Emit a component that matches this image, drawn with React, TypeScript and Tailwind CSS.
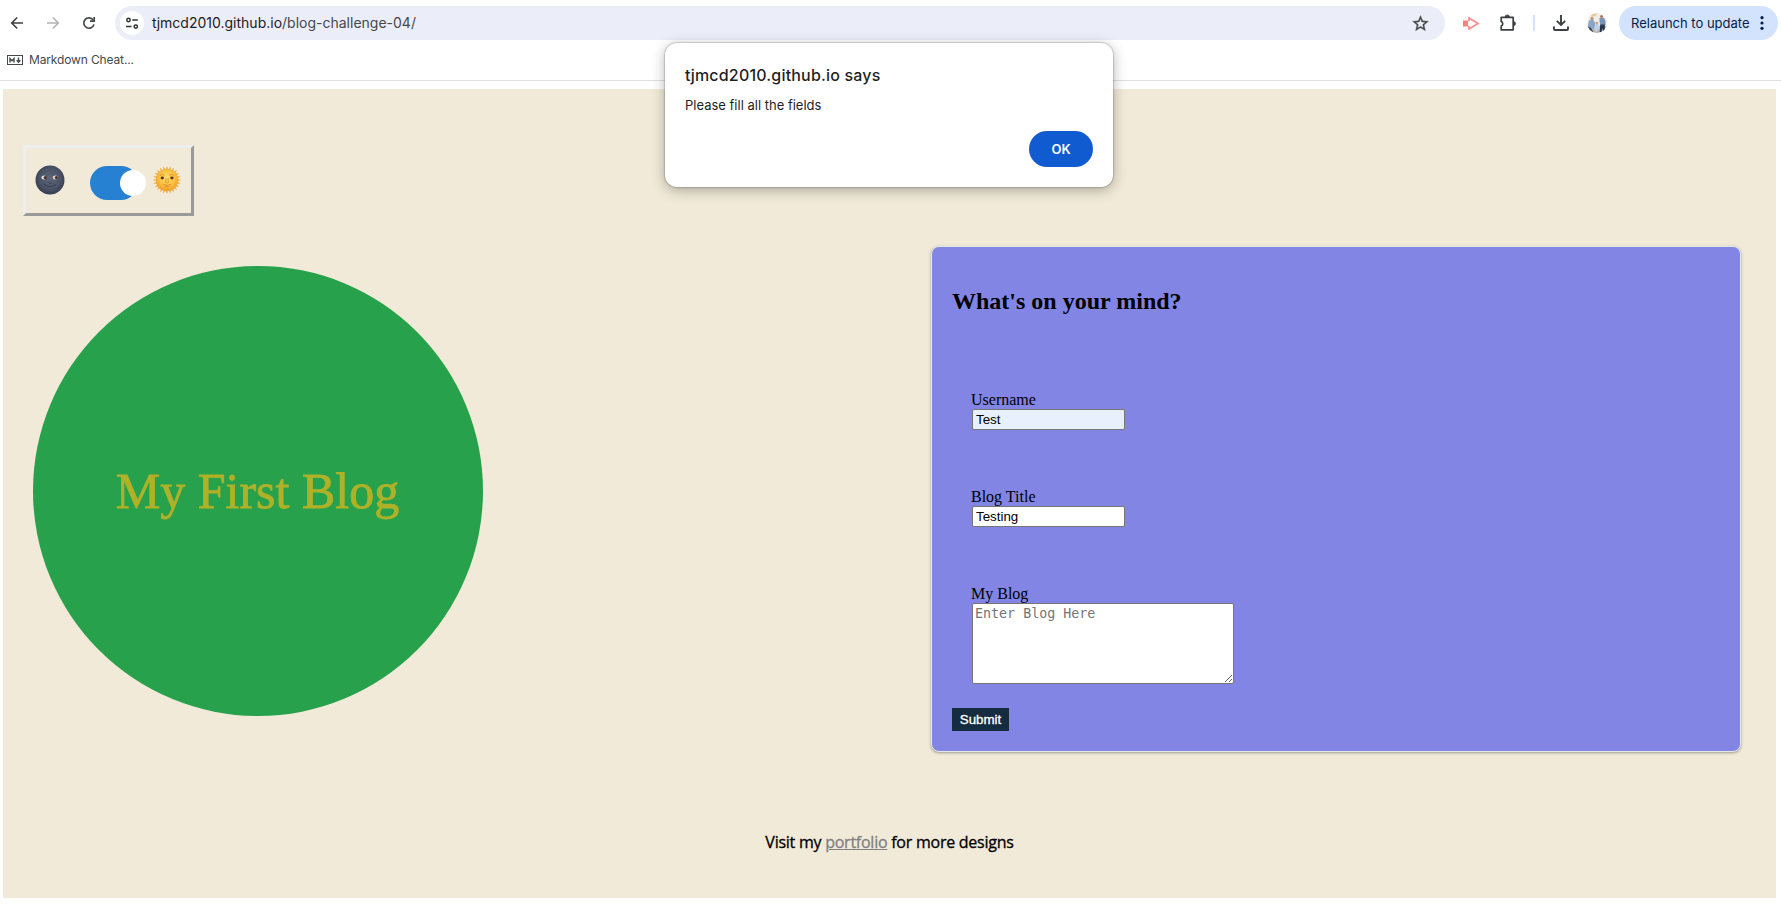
import type { ReactNode } from "react";

function BackIcon({ className }: { className: string }) {
  return (
    <svg viewBox="0 0 14 14" className={className} fill="none" stroke="currentColor" strokeWidth="1.6">
      <path d="M13 7H2M7.2 1.5 1.7 7l5.5 5.5" />
    </svg>
  );
}

function ReloadIcon() {
  return (
    <svg viewBox="0 0 14 14" className="size-3.5 text-[#444746]" fill="none" stroke="currentColor" strokeWidth="1.7">
      <path d="M12 8.4A5.2 5.2 0 1 1 11.2 4" />
      <path d="M12.2 1v4.2H8" />
    </svg>
  );
}

function TuneIcon() {
  return (
    <svg viewBox="0 0 13 13" className="size-[13px] text-[#2f3133]" fill="none" stroke="currentColor" strokeWidth="1.5">
      <circle cx="2.5" cy="3" r="1.7" />
      <path d="M6.3 3h5.5M0 9.6h5.5" />
      <circle cx="9.8" cy="9.6" r="1.7" />
    </svg>
  );
}

function StarIcon() {
  return (
    <svg viewBox="0 0 24 24" className="size-[19px] text-[#444746]" fill="currentColor" stroke="currentColor" strokeWidth=".4">
      <path d="m22 9.24-7.19-.62L12 2 9.19 8.63 2 9.24l5.46 4.73L5.82 21 12 17.27 18.18 21l-1.63-7.03L22 9.24zM12 15.4l-3.76 2.27 1-4.28-3.32-2.88 4.38-.38L12 6.1l1.71 4.04 4.38.38-3.32 2.88 1 4.28L12 15.4z" />
    </svg>
  );
}

function CameraIcon() {
  return (
    <svg viewBox="0 0 17 13" className="h-[13px] w-[17px]">
      <rect x="0" y="3.5" width="5" height="6" fill="#fb7f7f" />
      <path d="M6 4.2V1l9 5.5-9 5.5V8.8" fill="none" stroke="#fb8c8c" strokeWidth="1.7" />
    </svg>
  );
}

function PuzzleIcon() {
  return (
    <svg viewBox="0 0 18 18" className="size-[18px] text-[#3c4043]" fill="none" stroke="currentColor" strokeWidth="1.7" strokeLinejoin="round">
      <path d="M2.2 3.4H14.2V15.8H2.2V12a2.5 2.5 0 0 0 0-4.6Z" />
      <path d="M6 3.2a2.3 2.3 0 0 1 4.6 0ZM14.4 7.4a2.2 2.2 0 0 1 0 4.4Z" fill="currentColor" strokeWidth=".6" />
    </svg>
  );
}

function DownloadIcon() {
  return (
    <svg viewBox="0 0 16 16" className="size-4 text-[#3c4043]" fill="none" stroke="currentColor" strokeWidth="1.9">
      <path d="M8 0v9.5M3.8 5.8 8 10l4.2-4.2M1 11.5V14q0 1 1 1h12q1 0 1-1v-2.5" />
    </svg>
  );
}

function Avatar() {
  return (
    <svg viewBox="0 0 20 20" className="size-5">
      <clipPath id="avatar">
        <circle cx="10" cy="10" r="10" />
      </clipPath>
      <g clipPath="url(#avatar)">
        <rect width="20" height="20" fill="#f1ece6" />
        <path d="M0 13h20v7H0z" fill="#b5b3ae" />
        <path d="M2 7.5l4-1 2 3v5l-4 2-3-4z" fill="#86a5c8" />
        <path d="M12.5 5h4.5l1.5 3v4h-5l-1-3z" fill="#7893b8" />
        <path d="M13.2 11.5h4.6V19h-1.6l-.8-4-1 4h-1.7z" fill="#27344c" />
        <path d="M8 11.5l4-1 .6 5-3 3.5-2.500-2z" fill="#c0d0e4" />
        <path d="M1 13.5l3 1.5 3 5H3z" fill="#3b4452" />
        <circle cx="5" cy="5.5" r="1.6" fill="#b88d72" />
        <circle cx="14.5" cy="3.5" r="1.5" fill="#a97c63" />
        <circle cx="9.8" cy="10" r="1.3" fill="#c49c82" />
        <path d="M3 1l7-1-1 3-5 1z" fill="#e6cda6" />
      </g>
    </svg>
  );
}

function MoonFace() {
  return (
    <svg viewBox="0 0 30 30" className="size-[30px]">
      <defs>
        <radialGradient id="moon" cx=".5" cy=".45" r=".55">
          <stop offset="0" stopColor="#5d6577" />
          <stop offset=".65" stopColor="#4b5366" />
          <stop offset="1" stopColor="#343c4f" />
        </radialGradient>
      </defs>
      <circle cx="15" cy="15" r="14.5" fill="url(#moon)" />
      <path d="M13.6 17.5q1.6 1.8 3.200 0M9 19.5q6 4 12 0" fill="none" stroke="#353c4d" strokeWidth="1" />
      <ellipse cx="9" cy="12.6" rx="2.6" ry="2" fill="#e0dcda" />
      <ellipse cx="20.4" cy="12.6" rx="2.6" ry="2" fill="#e0dcda" />
      <circle cx="10.3" cy="12.6" r="1.6" fill="#4b2b22" />
      <circle cx="21.4" cy="12.6" r="1.6" fill="#4b2b22" />
    </svg>
  );
}

const rays = Array.from({ length: 24 }, (_, i) => i * 15);

function SunFace() {
  return (
    <svg viewBox="0 0 30 30" className="size-[30px]">
      <defs>
        <radialGradient id="sun" cx=".5" cy=".42" r=".58">
          <stop offset="0" stopColor="#ffe06a" />
          <stop offset=".6" stopColor="#fcc242" />
          <stop offset="1" stopColor="#ee9a2a" />
        </radialGradient>
      </defs>
      {rays.map((angle) => (
        <path key={angle} d="M13.7 5 15 .7 16.3 5z" fill="#f2ae38" transform={`rotate(${angle} 15 15)`} />
      ))}
      <circle cx="15" cy="15" r="10.9" fill="url(#sun)" />
      <path d="M8 10.5q2.2-1.8 4.6-.2M17.4 10.3q2.4-1.6 4.6.2M14 13l-.3 4.5q1.3 1 2.6 0L16 13M10.5 19q4.500 3 9 0M13 21.3q2 .8 4 0" fill="none" stroke="#d48a26" strokeWidth=".8" />
      <ellipse cx="10.3" cy="13" rx="1.7" ry="1.4" fill="#5a3a2c" />
      <ellipse cx="19.9" cy="13" rx="1.7" ry="1.4" fill="#5a3a2c" />
    </svg>
  );
}

function Field({ label, children }: { label: string; children: ReactNode }) {
  return (
    <label className="flex flex-col items-start text-base leading-[18px]">
      <span className="-ml-px">{label}</span>
      {children}
    </label>
  );
}

function Browser() {
  return (
    <header className="h-[81px] border-b border-[#e0e0e2] bg-white font-[Inter,sans-serif]">
      <div className="flex h-[46px] items-center pl-2.5">
        <BackIcon className="size-3.5 text-[#3c4043]" />
        <BackIcon className="ml-[22px] size-3.5 rotate-180 text-[#b2b3b5]" />
        <span className="ml-[22px]">
          <ReloadIcon />
        </span>
        <div className="ml-[19px] flex h-[34px] w-[1330px] items-center rounded-full bg-[#ebeef8] pr-[15px] pl-[5px]">
          <span className="flex size-6 items-center justify-center rounded-full bg-white">
            <TuneIcon />
          </span>
          <span className="ml-2 text-sm whitespace-nowrap text-[#1f2023]">
            tjmcd2010.github.io<span className="text-[#46484b]">/blog-challenge-04/</span>
          </span>
          <span className="ml-auto">
            <StarIcon />
          </span>
        </div>
        <div className="ml-[18px] flex items-center">
          <CameraIcon />
          <span className="ml-[19px]">
            <PuzzleIcon />
          </span>
          <span className="ml-4 h-4 w-0.5 bg-[#d3e3fd]" />
          <span className="ml-[18px]">
            <DownloadIcon />
          </span>
          <span className="ml-[18px]">
            <Avatar />
          </span>
        </div>
        <div className="ml-3 flex h-[34px] w-[159px] items-center rounded-full bg-[#d3e3fd] pl-3 text-[13px] text-[#041e49]">
          <span className="pt-0.5 whitespace-nowrap">Relaunch to update</span>
          <svg viewBox="0 0 4 16" className="ml-2.5 h-4 w-1" fill="#041e49">
            <circle cx="2" cy="2.7" r="1.6" />
            <circle cx="2" cy="8" r="1.6" />
            <circle cx="2" cy="13.3" r="1.6" />
          </svg>
        </div>
      </div>
      <div className="flex h-7 items-center pl-[7px] text-xs text-[#46484b]">
        <svg viewBox="0 0 16 10" className="h-2.5 w-4" fill="none" stroke="#46484b">
          <rect x=".5" y=".5" width="15" height="9" />
          <path d="M3 7.5v-4l2 2.2 2-2.2v4M11.5 2.5v4M9.7 5.3l1.8 1.9 1.8-1.9" strokeWidth="1.4" />
        </svg>
        <span className="ml-1.5 tracking-[-0.14px] whitespace-nowrap">Markdown Cheat...</span>
      </div>
    </header>
  );
}

function Dialog() {
  return (
    <div className="absolute top-[43px] left-[665px] flex h-36 w-[448px] flex-col rounded-xl bg-white px-5 pt-[22px] font-[Inter,sans-serif] text-[#1f1f1f] shadow-[0_0_1px_1px_rgba(0,0,0,0.16),0_3px_14px_rgba(0,0,0,0.3)]">
      <h1 className="text-base leading-5 font-medium tracking-[0.18px]">tjmcd2010.github.io says</h1>
      <p className="mt-3 text-[13px] leading-4">Please fill all the fields</p>
      <button className="mt-[18px] h-9 w-16 self-end rounded-full bg-[#115bd0] pt-0.5 text-[13px] font-semibold text-white">OK</button>
    </div>
  );
}

export default function App() {
  return (
    <div className="relative h-[911px] w-[1781px] overflow-hidden bg-white">
      <Browser />
      <main className="mt-2 ml-[3px] flex h-[809px] w-[1773px] flex-col bg-[#f1ead8] pt-14 font-['Liberation_Serif',serif] text-black">
        <div className="ml-5 flex h-[71px] w-[171px] items-start border-3 border-t-[#eeeeee] border-r-[#9a9a9a] border-b-[#9a9a9a] border-l-[#eeeeee] pt-[17px] pl-[9px]">
          <MoonFace />
          <span className="mt-px ml-[25px] flex h-[34px] w-12 items-center justify-end rounded-full bg-[#2681d2]">
            <span className="-mr-2 size-[26px] shrink-0 rounded-full bg-white" />
          </span>
          <span className="ml-[14px]">
            <SunFace />
          </span>
        </div>
        <div className="mt-[30px] flex">
          <div className="mt-5 ml-[30px] flex size-[450px] items-center justify-center rounded-full bg-[#28a14c] pr-px text-[50px] text-[#afb128] [-webkit-text-stroke:0.8px_#afb128]">
            My First Blog
          </div>
          <form className="ml-[448px] h-[506px] w-[810px] rounded-lg border border-[#e4eaea] bg-[#8285e4] pt-10 pl-5 shadow-[0_1px_3px_rgba(0,0,0,0.35)]">
            <h2 className="text-2xl leading-7 font-bold">What's on your mind?</h2>
            <div className="mt-[76px] ml-5 flex flex-col">
              <Field label="Username">
                <input defaultValue="Test" className="h-[21px] w-[153px] rounded-xs border border-[#767676] bg-[#e8f0fe] px-[3px] font-['Liberation_Sans',sans-serif] text-[13.33px] leading-4" />
              </Field>
              <span className="h-[58px]" />
              <Field label="Blog Title">
                <input defaultValue="Testing" className="h-[21px] w-[153px] rounded-xs border border-[#767676] bg-white px-[3px] font-['Liberation_Sans',sans-serif] text-[13.33px] leading-4" />
              </Field>
              <span className="h-[58px]" />
              <Field label="My Blog">
                <textarea placeholder="Enter Blog Here" className="h-[81px] w-[262px] resize rounded-xs border border-[#767676] bg-white p-0.5 font-['DejaVu_Sans_Mono',monospace] text-[13.33px] leading-4 placeholder:text-[#757575]" />
              </Field>
            </div>
            <button type="button" className="mt-6 block h-[23px] w-[57px] bg-[#152b40] font-['Liberation_Sans',sans-serif] text-[13.33px] leading-4 text-white [-webkit-text-stroke:0.3px_white]">
              Submit
            </button>
          </form>
        </div>
        <footer className="mt-20 text-center font-['Open_Sans',sans-serif] text-base leading-5 tracking-[-0.25px] [-webkit-text-stroke:0.3px_currentColor]">
          Visit my <a className="text-[#808080] underline">portfolio</a> for more designs
        </footer>
      </main>
      <Dialog />
    </div>
  );
}
